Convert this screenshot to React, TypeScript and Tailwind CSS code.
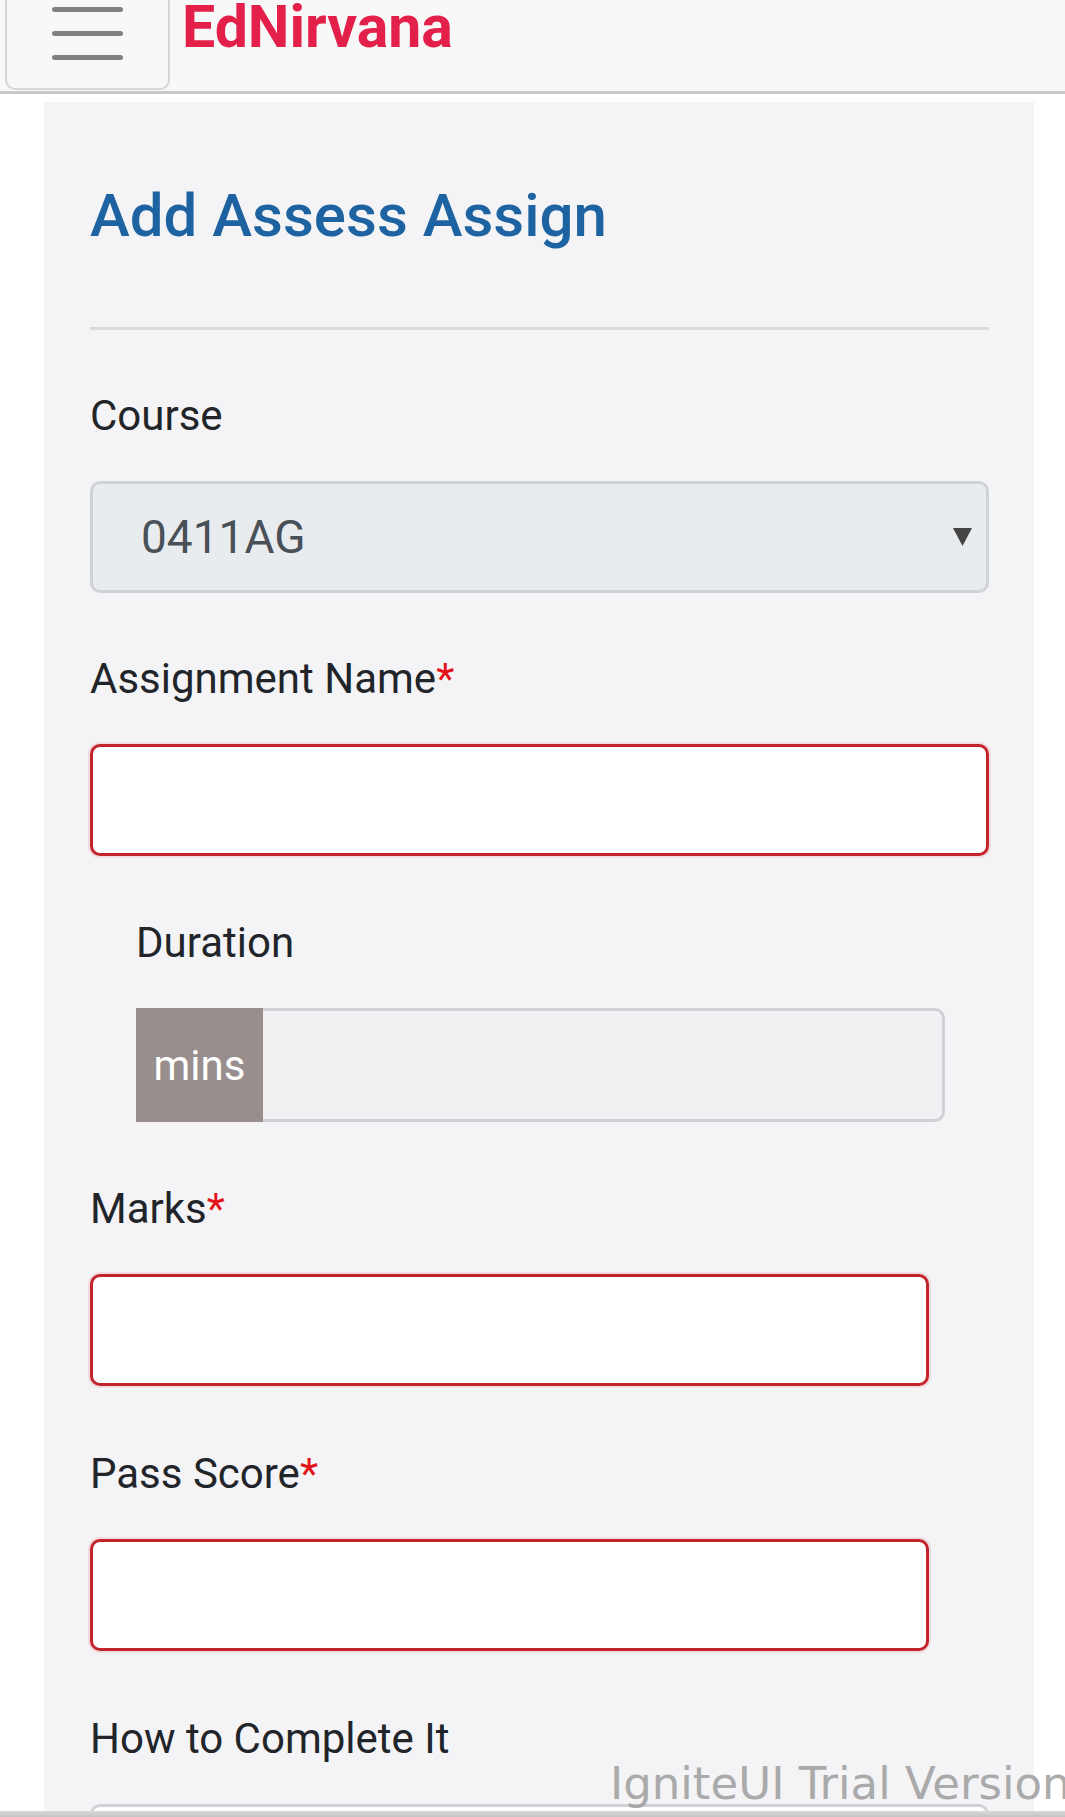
import React from "react";

const font = { fontFamily: "Roboto, 'Noto Sans', sans-serif" };

function Label({ text, required, indent }: { text: string; required?: boolean; indent?: boolean }) {
  return (
    <div
      className={`text-[42px] leading-[63px] text-[#212529] mb-[34px] ${indent ? "pl-[46px]" : ""}`}
    >
      {text}
      {required && <span className="text-[#e3141c]">*</span>}
    </div>
  );
}

function RedInput({ wide }: { wide?: boolean }) {
  return (
    <div
      className={`h-[112px] ${wide ? "w-[899px]" : "w-[839px]"} bg-white border-[3px] border-[#c3242c] rounded-[10px] shadow-[0_0_0_2px_rgba(220,53,69,0.12)]`}
    />
  );
}

export default function App() {
  return (
    <div className="relative h-[1817px] w-[1065px] overflow-hidden bg-white" style={font}>
      {/* Header */}
      <div className="flex items-start h-[94px] bg-[#f8f8f8] border-b-[3px] border-[#c9c9c9]">
        <div className="ml-[5px] mt-[-12px] h-[102px] w-[165px] border-2 border-[#d6d6d6] rounded-[10px] bg-[#f8f8f8] flex flex-col items-center pt-[17px] gap-[19px]">
          <div className="h-[5px] w-[71px] rounded-full bg-[#808080]" />
          <div className="h-[5px] w-[71px] rounded-full bg-[#808080]" />
          <div className="h-[5px] w-[71px] rounded-full bg-[#808080]" />
        </div>
        <div className="ml-[12px] text-[59px] leading-[54px] font-bold text-[#e2204a]">
          EdNirvana
        </div>
      </div>

      {/* Panel */}
      <div className="ml-[44px] mt-[8px] w-[990px] h-[1800px] bg-[#f4f4f6] pt-[78px] pl-[46px] pr-[45px]">
        <h1 className="text-[60px] leading-[72px] font-medium text-[#1e63a1]">Add Assess Assign</h1>
        <div className="mt-[75px] h-[3px] bg-[#dadada]" />

        <div className="mt-[54px]">
          <Label text="Course" />
          <div className="relative h-[112px] w-[899px] bg-[#e9ecef] border-[3px] border-[#cfd3d8] rounded-[10px] flex items-center pl-[48px]">
            <span className="text-[46px] text-[#495057]">0411AG</span>
            <svg className="absolute right-[14px] top-[44px]" width="19" height="18" viewBox="0 0 19 18">
              <path d="M0 0 H19 L9.5 18 Z" fill="#444" />
            </svg>
          </div>
        </div>

        <div className="mt-[54px]">
          <Label text="Assignment Name" required />
          <RedInput wide />
        </div>

        <div className="mt-[55px]">
          <Label text="Duration" indent />
          <div className="ml-[46px] flex h-[114px] w-[809px]">
            <div className="w-[127px] h-full bg-[#978e8d] flex items-center justify-center text-[42px] text-white">
              mins
            </div>
            <div className="flex-1 h-full bg-[#f1f1f3] border-[3px] border-l-0 border-[#d0d0d5] rounded-r-[10px]" />
          </div>
        </div>

        <div className="mt-[55px]">
          <Label text="Marks" required />
          <RedInput />
        </div>

        <div className="mt-[56px]">
          <Label text="Pass Score" required />
          <RedInput />
        </div>

        <div className="mt-[56px]">
          <Label text="How to Complete It" />
          <div className="h-[112px] w-[899px] bg-white border-[3px] border-[#cfd3d8] rounded-[10px]" />
        </div>
      </div>

      {/* Watermark */}
      <div
        className="absolute left-[610px] top-[1757px] whitespace-nowrap text-[45px] leading-[54px] text-[#a2a2a2] opacity-90"
        style={{ fontFamily: "'DejaVu Sans', Verdana, sans-serif" }}
      >
        IgniteUI Trial Version
      </div>

      {/* bottom shade */}
      <div className="absolute left-0 bottom-0 h-[6px] w-full bg-gradient-to-b from-[#d8d8d8] to-[#c4c4c4]" />
    </div>
  );
}
